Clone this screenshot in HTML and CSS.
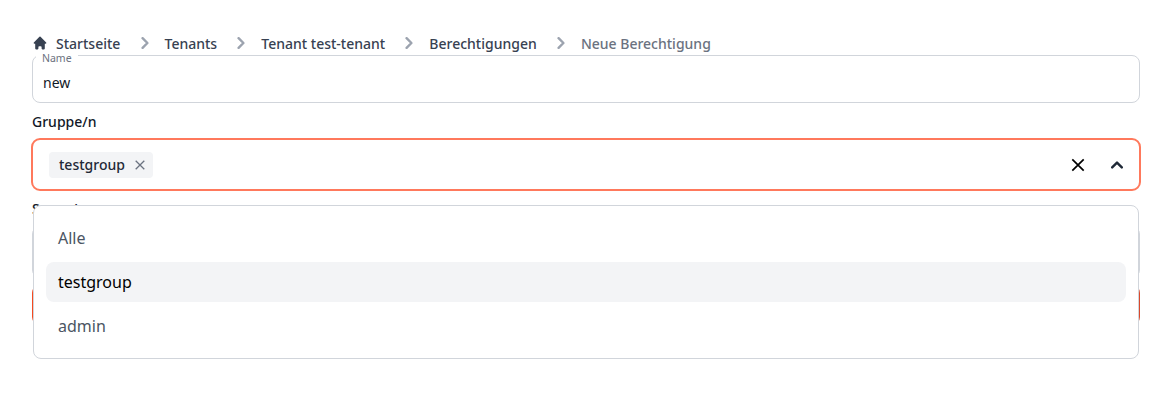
FILE: index.html
```html
<!DOCTYPE html>
<html lang="de">
<head>
<meta charset="utf-8">
<title>Neue Berechtigung</title>
<link rel="stylesheet" href="styles.css">
</head>
<body>
<nav class="breadcrumb">
  <svg class="home" viewBox="0 0 20 20"><path d="M10.7 2.3a1 1 0 0 0-1.4 0l-7 7a1 1 0 0 0 .7 1.7H4V17a1 1 0 0 0 1 1h2a1 1 0 0 0 1-1v-2a1 1 0 0 1 1-1h2a1 1 0 0 1 1 1v2a1 1 0 0 0 1 1h2a1 1 0 0 0 1-1v-6h1a1 1 0 0 0 .7-1.7l-7-7z"/></svg>
  <a class="crumb">Startseite</a>
  <svg class="sep" viewBox="0 0 6 10"><path d="M1 9l4-4-4-4"/></svg>
  <a class="crumb">Tenants</a>
  <svg class="sep" viewBox="0 0 6 10"><path d="M1 9l4-4-4-4"/></svg>
  <a class="crumb">Tenant test-tenant</a>
  <svg class="sep" viewBox="0 0 6 10"><path d="M1 9l4-4-4-4"/></svg>
  <a class="crumb">Berechtigungen</a>
  <svg class="sep" viewBox="0 0 6 10"><path d="M1 9l4-4-4-4"/></svg>
  <span class="crumb current">Neue Berechtigung</span>
</nav>
<form class="form">
  <div class="field"><span class="field-label">Name</span><span class="field-value">new</span></div>
  <div class="label">Gruppe/n</div>
  <div class="select open">
    <span class="tag">testgroup<svg class="tag-x" viewBox="0 0 10 10"><path d="M.7.7l8.6 8.6M9.3.7L.7 9.3"/></svg></span>
    <svg class="clear" viewBox="0 0 14 14"><path d="M1.3 1.3l11.4 11.4M12.7 1.3L1.3 12.7"/></svg>
    <svg class="caret" viewBox="0 0 10 6"><path d="M9 5L5 1 1 5"/></svg>
    <div class="menu">
      <div class="option">Alle</div>
      <div class="option selected">testgroup</div>
      <div class="option">admin</div>
    </div>
  </div>
  <div class="label second">Scope/n</div>
  <div class="select-closed"></div>
  <div class="submit"></div>
</form>
</body>
</html>
```
FILE: styles.css
```css
* { box-sizing: border-box; }
body { margin: 0; padding: 32px 22px 0 32px; height: 400px; overflow: hidden; background: #fff; color: #111827; font: 500 14px/20px "Noto Sans", sans-serif; }
svg { fill: none; flex: none; stroke-linecap: round; stroke-linejoin: round; }
.breadcrumb { display: flex; align-items: center; height: 23px; }
.crumb { color: #374151; }
.current { color: #6b7280; }
.home { width: 16px; height: 16px; fill: #374151; margin: -1px 8px 0 0; }
.sep { width: 12px; height: 12px; margin: -1px 14px 0 18.15px; stroke: #9ca3af; stroke-width: 2; }
.form { width: 1108px; }
.field { position: relative; height: 48px; padding: 17px 10px 0; border: 1px solid #d1d5db; border-radius: 8px; font-weight: 400; }
.field-value { display: block; }
.field-label { position: absolute; left: 3px; top: -3px; padding: 0 6px; background: #fff; color: #6b7280; font-size: 10.5px; line-height: 10px; }
.label { margin-top: 9px; height: 20px; }
.select { position: relative; display: flex; align-items: center; height: 53px; margin: 6px -1px 0; padding: 0 17px 0 16px; border: 2px solid #ff795c; border-radius: 9px; }
.tag { display: flex; align-items: center; height: 26px; padding: 0 8px 0 10px; background: #f3f4f6; border-radius: 4px; color: #1f2937; }
.tag-x { width: 10px; height: 10px; margin-left: 10px; stroke: #6b7280; stroke-width: 1.3; stroke-linecap: butt; }
.clear { width: 14px; height: 14px; margin-left: auto; margin-right: 26px; stroke: #000; stroke-width: 1.7; stroke-linecap: butt; }
.caret { width: 12px; height: 12px; margin-right: -1px; stroke: #1f2937; stroke-width: 2; }
.menu { position: absolute; z-index: 2; left: 0; top: 65px; width: 1106px; height: 154px; padding: 12px; border: 1px solid #d1d5db; border-radius: 8px; background: #fff; font-size: 16px; font-weight: 400; }
.option { height: 40px; margin-bottom: 4px; padding: 0 12px; border-radius: 8px; color: #4b5563; line-height: 40px; }
.selected { background: #f3f4f6; color: #000; }
.second { margin-top: 8px; }
.select-closed { height: 52px; margin-top: 7px; border: 1px solid #d1d5db; border-radius: 8px; }
.submit { height: 40px; margin-top: 7px; background: linear-gradient(90deg, #f54a20, #d9492c); border-radius: 8px; }
```
